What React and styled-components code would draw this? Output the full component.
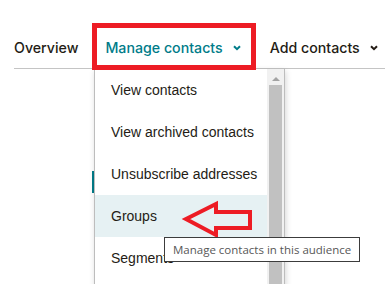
import React from "react";
import styled, { createGlobalStyle } from "styled-components";

const Global = createGlobalStyle`
  html, body { margin: 0; padding: 0; background: #fff; }
  body { width: 385px; height: 284px; overflow: hidden; font-family: "Liberation Sans", Arial, sans-serif; }
`;

const Page = styled.div`
  position: relative;
  width: 385px;
  height: 284px;
  overflow: hidden;
`;

const Nav = styled.nav`
  display: flex;
  align-items: flex-start;
  gap: 14px;
  height: 68px;
  margin-left: 14px;
  border-bottom: 1px solid #c4c4c4;
`;

const Tab = styled.div`
  box-sizing: border-box;
  display: flex;
  align-items: center;
  gap: 10px;
  height: 47px;
  margin-top: 23px;
  padding: 2px ${(p) => (p.$marked ? "10px" : "0")} 0 ${(p) => (p.$marked ? "8px" : "0")};
  border: ${(p) => (p.$marked ? "5px solid #ed1c24" : "none")};
  color: ${(p) => (p.$active ? "#007c89" : "#241c15")};
  font-family: Inter, "Liberation Sans", sans-serif;
  font-weight: 500;
  font-size: 14.2px;
  line-height: 20px;
  white-space: nowrap;
  position: relative;
  z-index: 2;
`;

const Chevron = ({ color }) => (
  <svg width="8" height="6" viewBox="0 0 8 6" aria-hidden="true">
    <path d="M1 1.2 L4 4.2 L7 1.2" fill="none" stroke={color} strokeWidth="2" />
  </svg>
);

const Menu = styled.div`
  position: absolute;
  left: 94px;
  top: 68px;
  width: 191px;
  height: 230px;
  box-sizing: border-box;
  border: 1px solid #bdbdbd;
  background: #fff;
  box-shadow: 1px 3px 6px rgba(0, 0, 0, 0.16);
  display: flex;
  z-index: 1;
`;

const List = styled.ul`
  list-style: none;
  margin: 0;
  padding: 0;
  flex: 1;
`;

const Item = styled.li`
  height: 42px;
  line-height: 42px;
  padding-left: 16px;
  font-size: 14px;
  color: #241c15;
  white-space: nowrap;
  background: ${(p) => (p.$hover ? "#e6f1f3" : "transparent")};
`;

const Track = styled.div`
  width: 17px;
  background: #f1f1f1;
  display: flex;
  flex-direction: column;
  align-items: center;
`;

const UpArrow = styled.div`
  margin-top: 8px;
  width: 0;
  height: 0;
  border-left: 4px solid transparent;
  border-right: 4px solid transparent;
  border-bottom: 4px solid #a3a3a3;
`;

const Thumb = styled.div`
  margin-top: 4px;
  width: 13px;
  flex: 1;
  background: #c1c1c1;
`;

const Marker = styled.div`
  position: absolute;
  left: 92px;
  top: 171px;
  width: 2px;
  height: 22px;
  background: #007c89;
`;

const Tooltip = styled.div`
  position: absolute;
  left: 164px;
  top: 237px;
  box-sizing: border-box;
  height: 25px;
  padding: 0 8px 0 8px;
  border: 1px solid #3c3c3c;
  background: #fff;
  color: #575757;
  font-family: "Open Sans", "Noto Sans", sans-serif;
  font-size: 11.5px;
  line-height: 23px;
  white-space: nowrap;
  z-index: 4;
`;

const Arrow = styled.svg`
  position: absolute;
  left: 180px;
  top: 198px;
  z-index: 3;
`;

export default function App() {
  return (
    <Page>
      <Global />
      <Nav>
        <Tab>Overview</Tab>
        <Tab $marked $active>
          Manage contacts <Chevron color="#007c89" />
        </Tab>
        <Tab>
          Add contacts <Chevron color="#241c15" />
        </Tab>
      </Nav>
      <Marker />
      <Menu>
        <List>
          <Item>View contacts</Item>
          <Item>View archived contacts</Item>
          <Item>Unsubscribe addresses</Item>
          <Item $hover>Groups</Item>
          <Item>Segments</Item>
        </List>
        <Track>
          <UpArrow />
          <Thumb />
        </Track>
      </Menu>
      <Arrow width="76" height="42" viewBox="0 0 76 42">
        <polygon
          points="6,21 36,6 36,14 70,14 70,30 36,30 36,37"
          fill="none"
          stroke="#ed1c24"
          strokeWidth="4"
          strokeLinejoin="miter"
        />
      </Arrow>
      <Tooltip>Manage contacts in this audience</Tooltip>
    </Page>
  );
}
